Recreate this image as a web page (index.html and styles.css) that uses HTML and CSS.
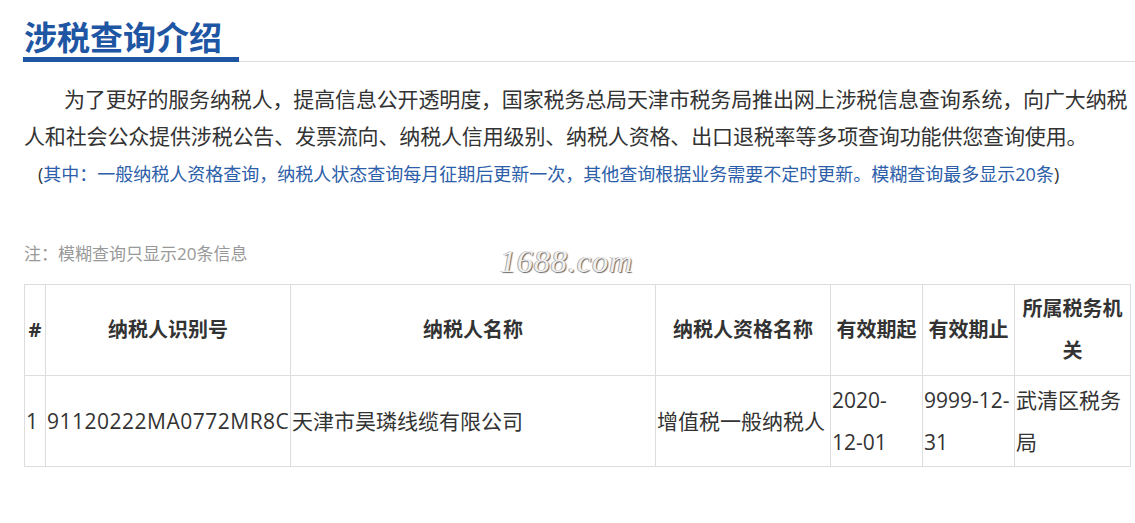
FILE: index.html
```html
<!DOCTYPE html>
<html lang="zh-CN">
<head>
<meta charset="UTF-8">
<meta name="viewport" content="width=device-width, initial-scale=1.0">
<title>涉税查询介绍</title>
<link rel="stylesheet" href="styles.css">
</head>
<body>
  <div class="page">
    <div class="title-bar">
      <h2 class="title">涉税查询介绍</h2>
    </div>

    <p class="intro">为了更好的服务纳税人，提高信息公开透明度，国家税务总局天津市税务局推出网上涉税信息查询系统，向广大纳税人和社会公众提供涉税公告、发票流向、纳税人信用级别、纳税人资格、出口退税率等多项查询功能供您查询使用。</p>
    <p class="remark">(<span class="blue">其中：一般纳税人资格查询，纳税人状态查询每月征期后更新一次，其他查询根据业务需要不定时更新。模糊查询最多显示20条</span>)</p>

    <div class="note-row">
      <p class="note">注：模糊查询只显示20条信息</p>
      <span class="watermark">1688.com</span>
    </div>

    <table class="result">
      <colgroup>
        <col class="c-no">
        <col class="c-id">
        <col class="c-name">
        <col class="c-type">
        <col class="c-date">
        <col class="c-date">
        <col class="c-org">
      </colgroup>
      <thead>
        <tr>
          <th>#</th>
          <th>纳税人识别号</th>
          <th>纳税人名称</th>
          <th>纳税人资格名称</th>
          <th>有效期起</th>
          <th>有效期止</th>
          <th>所属税务机关</th>
        </tr>
      </thead>
      <tbody>
        <tr>
          <td>1</td>
          <td class="code">91120222MA0772MR8C</td>
          <td>天津市昊璘线缆有限公司</td>
          <td>增值税一般纳税人</td>
          <td>2020-<br>12-01</td>
          <td>9999-12-31</td>
          <td>武清区税务局</td>
        </tr>
      </tbody>
    </table>
  </div>
</body>
</html>
```

FILE: styles.css
```css
body {
  margin: 0;
  overflow-x: hidden;
  background-color: #fff;
  font-family: "Open Sans", "Noto Sans CJK SC", sans-serif;
  color: #333;
}

.page {
  width: 1118px;
  padding: 16px 0 0 24px;
}

.title-bar {
  border-bottom: 1px solid #ddd;
}

.title {
  display: inline-block;
  margin: 0 0 -1px -1px;
  padding: 0 17px 0 1px;
  font-family: "Noto Sans CJK SC", sans-serif;
  font-size: 33px;
  line-height: 41px;
  font-weight: bold;
  color: #1e56a4;
  border-bottom: 5px solid #1e56a4;
}

.intro {
  margin: 18px 0 0 0;
  font-family: "Noto Sans CJK SC", sans-serif;
  font-size: 21px;
  line-height: 37px;
  letter-spacing: -0.15px;
  text-indent: 40px;
  color: #333;
}

.remark {
  margin: 1px 0 0 14px;
  font-size: 18px;
  line-height: 39px;
  color: #333;
}

.blue {
  color: #2c5ea9;
}

.note-row {
  position: relative;
  margin-top: 43px;
  height: 47px;
}

.note {
  margin: 0;
  font-size: 17px;
  line-height: 34px;
  color: #999;
}

.watermark {
  position: absolute;
  left: 476px;
  top: 6px;
  font-family: "Liberation Serif", serif;
  font-style: italic;
  font-size: 32px;
  line-height: 36px;
  letter-spacing: 1px;
  color: #f0f0f0;
  text-shadow: 1px 1px 1px #666, -1px 0 0 #aaa;
}

.result {
  border-collapse: collapse;
  table-layout: fixed;
  width: 1106px;
  border: 1px solid #ddd;
}

.c-no { width: 21px; }
.c-id { width: 245px; }
.c-name { width: 365px; }
.c-type { width: 175px; }
.c-date { width: 92px; }
.c-org { width: 116px; }

.result th,
.result td {
  border: 1px solid #ddd;
  padding: 3px 1px;
  line-height: 42px;
}

.result th {
  font-size: 20px;
  font-weight: bold;
  color: #333;
  text-align: center;
}

.result td {
  font-size: 21px;
  color: #333;
  text-align: left;
  vertical-align: middle;
}

.result .code {
  letter-spacing: 0.5px;
}
```
